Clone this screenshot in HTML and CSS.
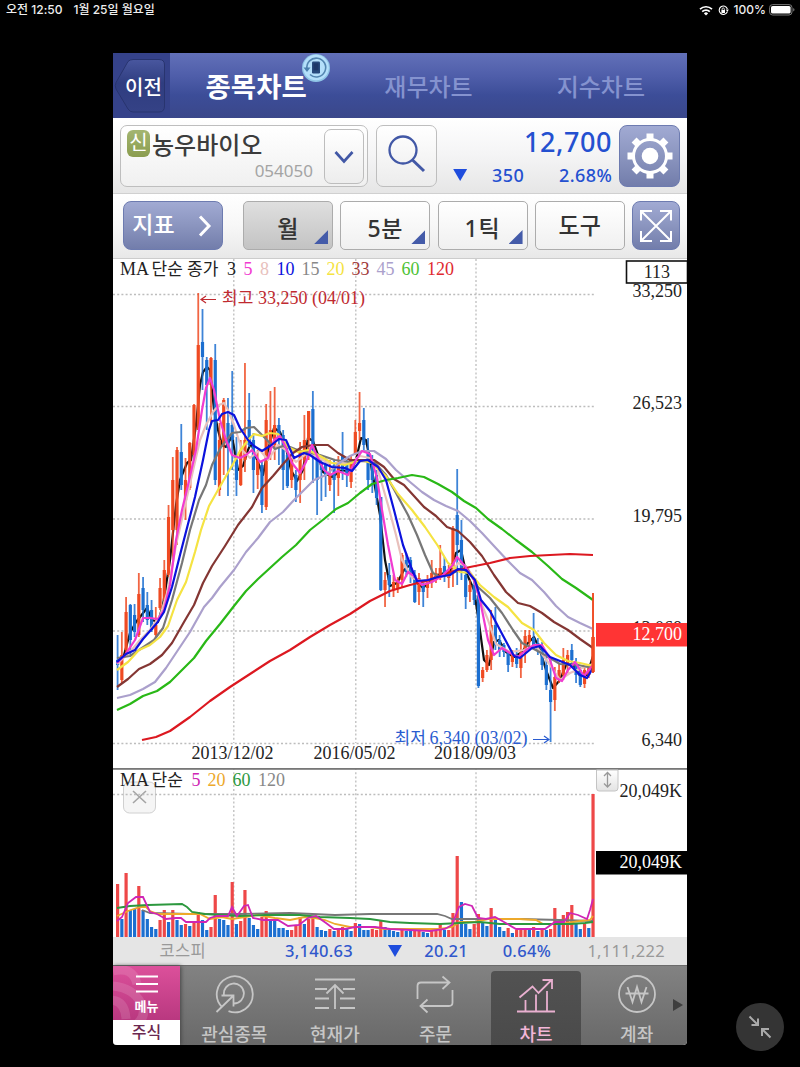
FILE: index.html
```html
<!DOCTYPE html>
<html lang="ko">
<head>
  <meta charset="UTF-8" />
  <title>종목차트</title>
  <meta name="viewport" content="width=device-width, initial-scale=1.0" />
  <link rel="stylesheet" href="styles.css">
</head>
<body>
  <div class="status">
    <div class="status-left"><span>오전 12:50</span><span>1월 25일 월요일</span></div>
    <div class="status-right">
      <svg width="14" height="11" viewBox="0 0 14 11"><path d="M1 4.2a8.6 8.6 0 0 1 12 0M3.2 6.6a5.4 5.4 0 0 1 7.6 0" fill="none" stroke="#fff" stroke-width="1.7"/><path d="M4.9 8.4a3 3 0 0 1 4.2 0L7 10.6z" fill="#fff"/></svg>
      <svg width="11" height="11" viewBox="0 0 11 11"><path d="M9.3 6.8A4.2 4.2 0 1 1 9.4 4" fill="none" stroke="#fff" stroke-width="1.1"/><path d="M7.8 4.6h3L9.4 7z" fill="#fff"/><rect x="3.4" y="5" width="3.6" height="3" fill="#fff"/><path d="M4.1 5V4a1.1 1.1 0 0 1 2.2 0v1" fill="none" stroke="#fff" stroke-width=".8"/></svg>
      <span>100%</span>
      <svg width="26" height="12" viewBox="0 0 26 12"><rect x=".6" y=".6" width="22.4" height="10.4" rx="3" fill="none" stroke="#777"/><rect x="2" y="2" width="19.6" height="7.6" rx="1.6" fill="#fff"/><path d="M24.2 4v3.6q1.3-.5 1.3-1.8T24.2 4" fill="#777"/></svg>
    </div>
  </div>

  <div class="app">
    <!-- HEADER -->
    <div class="header">
      <div class="back">
        <svg class="back-shape" width="57" height="65" viewBox="0 0 57 65"><defs><linearGradient id="gBack" x1="0" y1="0" x2="0" y2="1"><stop offset="0" stop-color="#49579f"/><stop offset=".45" stop-color="#2f3d80"/><stop offset="1" stop-color="#354286"/></linearGradient></defs><path d="M15 8.500Q17 6.500 20 6.500H46Q51.500 6.500 51.500 12V53Q51.500 59 46 59H20Q17 59 15 56L3 36Q1.500 32.500 3 29.500Z" fill="url(#gBack)" stroke="#28346f"/></svg>
        <span>이전</span>
      </div>
      <div class="tab active">종목차트
        <svg class="sync" width="30" height="30" viewBox="0 0 30 30"><circle cx="15" cy="15" r="14" fill="#8fc4e6"/><circle cx="15" cy="14.500" r="12.800" fill="#b4dffa"/><path d="M6 16A9.400 9.400 0 1 1 9 21.500" fill="none" stroke="#5385b0" stroke-width="1.600"/><path d="M2.500 14.500h7L6 19z" fill="#4a7fae"/><rect x="11" y="8.500" width="8" height="12" rx="1.200" fill="#27497c"/><rect x="12.500" y="10.300" width="5" height="7" fill="#1d3768"/></svg>
      </div>
      <div class="tab">재무차트</div>
      <div class="tab">지수차트</div>
    </div>

    <!-- STOCK -->
    <div class="stock">
      <div class="search">
        <div class="names">
          <div class="name"><i>신</i><b>농우바이오</b></div>
          <div class="code">054050</div>
        </div>
        <div class="drop"><svg width="20" height="14" viewBox="0 0 20 14"><path d="M1.500 2L10 11.500 18.500 2" fill="none" stroke="#4258a6" stroke-width="2.700"/></svg></div>
      </div>
      <div class="find"><svg width="42" height="42" viewBox="0 0 42 42"><circle cx="17" cy="17" r="13.500" fill="none" stroke="#4258a6" stroke-width="2.300"/><path d="M26.500 27L38 38" stroke="#4258a6" stroke-width="3"/></svg></div>
      <div class="quote">
        <div class="price">12,700</div>
        <div class="diff"><em class="down"></em><span>350</span><span>2.68%</span></div>
      </div>
      <div class="blue gear"><svg width="48" height="48" viewBox="-24 -24 48 48"><g fill="#fff"><path id="tooth" d="M-3.500-22.500h7v6h-7z"/><use href="#tooth" transform="rotate(45)"/><use href="#tooth" transform="rotate(90)"/><use href="#tooth" transform="rotate(135)"/><use href="#tooth" transform="rotate(180)"/><use href="#tooth" transform="rotate(225)"/><use href="#tooth" transform="rotate(270)"/><use href="#tooth" transform="rotate(315)"/></g><circle r="16.500" fill="none" stroke="#fff" stroke-width="3"/><circle r="8.300" fill="#fff"/></svg></div>
    </div>

    <!-- TOOLS -->
    <div class="tools">
      <div class="blue indi"><span>지표</span><svg width="14" height="22" viewBox="0 0 14 22"><path d="M2 1.500L11 11 2 20.500" fill="none" stroke="#fff" stroke-width="3"/></svg></div>
      <div class="tool on corner">월</div>
      <div class="tool corner">5분</div>
      <div class="tool corner">1틱</div>
      <div class="tool">도구</div>
      <div class="blue expand"><svg width="34" height="34" viewBox="0 0 34 34"><path d="M2 2L32 32M32 2L2 32M2 11.500V2H13M21 2H32V11.500M32 22V32H21M13 32H2V22" fill="none" stroke="#fff" stroke-width="2"/></svg></div>
    </div>

    <svg class="chart" id="priceChart" width="574" height="509" viewBox="113 259 574 509"></svg>
    <svg class="chart volume" id="volumeChart" width="574" height="169" viewBox="113 768 574 169"></svg>

    <!-- INDEX -->
    <div class="index">
      <span class="muted">코스피</span><span>3,140.63</span><em class="down"></em><span>20.21</span><span>0.64%</span><span class="muted">1,111,222</span>
    </div>

    <!-- BOTTOM MENU -->
    <div class="bottom">
      <div class="menu">
        <div class="menu-top">
          <svg class="swirl" width="67" height="55" viewBox="0 0 67 55"><path d="M0 5Q20 0 24 18M0 20Q20 22 28 37T18 62M-3 34Q12 34 13 53" fill="none" stroke="#fff" stroke-opacity=".13" stroke-width="9"/></svg>
          <svg width="22" height="18" viewBox="0 0 22 18"><path d="M0 1.500H22M0 9H22M0 16.500H22" stroke="#fff" stroke-width="2"/></svg>
          <span>메뉴</span>
        </div>
        <div class="menu-bottom">주식</div>
      </div>
      <div class="item"><svg width="40" height="40" viewBox="0 0 40 40"><path d="M8.500 33.500A18 18 0 1 1 14.500 37.200M10 21A10 10 0 1 1 20 29.500M2.500 38L19 22M7.500 21.500H19.500V32.500" /></svg><span>관심종목</span></div>
      <div class="item"><svg width="42" height="40" viewBox="0 0 42 40"><path d="M1 5.500H41M1 15H13M29 15H41M1 24.500H15M26 24.500H41M1 34H15M26 34H41M21 35V11M12.500 19.500L21 11 29.500 19.500"/></svg><span>현재가</span></div>
      <div class="item"><svg width="40" height="40" viewBox="0 0 40 40"><path d="M2.500 25V12Q2.500 8.500 6 8.500H34M27.500 2.500L34.500 8.500 27.500 15M37.500 16V28.500Q37.500 32 34 32H6M12.500 25.500L5.500 32 12.500 38.500"/></svg><span>주문</span></div>
      <div class="item sel"><svg width="40" height="40" viewBox="0 0 40 40"><path d="M1 37.500H39M9.500 37V26M20 37V20.500M31 37V17M3.500 23.500L16.500 12.500 22.500 19 35.500 6M26.500 6H36V15"/></svg><span>차트</span></div>
      <div class="item"><svg width="40" height="40" viewBox="0 0 40 40"><circle cx="20" cy="20" r="18"/><path d="M10.500 13L15.500 28 20 13 24.500 28 29.500 13M8.500 19.500H31.500"/></svg><span>계좌</span></div>
      <div class="next"></div>
    </div>
  </div>

  <div class="shrink"><svg width="24" height="24" viewBox="0 0 24 24"><path d="M1.500 1.500L10 10M10 3.500V10H3.500M22.500 22.500L14 14M21 14H14V21" fill="none" stroke="#aaa" stroke-width="2"/></svg></div>

<script src="chart.js"></script>
</body>
</html>
```
FILE: styles.css
```css
*,*::before,*::after{box-sizing:border-box;margin:0;padding:0}
body{width:800px;height:1067px;background:#000;overflow:hidden;font-family:"Noto Sans","Noto Sans CJK KR",sans-serif}
svg{display:block}
i,em{font-style:normal}
/* status bar */
.status{height:53px;padding:2px 5px 0 6px;display:flex;justify-content:space-between;align-items:flex-start;color:#eee;font:500 12px/16px Inter,"Noto Sans CJK KR",sans-serif}
.status-left{display:flex;gap:11px}
.status-right{display:flex;gap:5px;align-items:center}
.status-right span{margin-right:-2px}
/* app */
.app{width:574px;height:992px;margin-left:113px;background:#fff;border-radius:0 0 4px 4px;overflow:hidden}
.header{height:65px;display:flex;background:linear-gradient(#6270b8,#4f5eaa 35%,#3c4d98 65%,#3a478a)}
.back{position:relative;width:57px;display:flex;align-items:center;justify-content:center;padding:2px 0 0 4px;background:#35428a;color:#fff;font-size:20px;font-weight:500}
.back-shape{position:absolute;left:0;top:0}
.back span{position:relative}
.tab{position:relative;flex:1;display:flex;align-items:center;justify-content:center;padding-bottom:1px;color:#8593cf;font-size:24px;font-weight:500}
.tab.active{color:#fff;font-size:27.500px;font-weight:600}
.sync{position:absolute;left:131px;top:0}
/* stock */
.stock{height:76px;padding:7px 7px 7px;display:flex;background:linear-gradient(#fff,#f4f4f5 50%,#e6e6e6);border-bottom:1px solid #d0d0d0}
.search{width:249px;height:62px;display:flex;justify-content:space-between;padding:3px;border:1px solid #bebebe;border-radius:7px;background:linear-gradient(#fff,#f0f0f0)}
.names{width:190px}
.name{height:32px;display:flex;align-items:center;padding-left:3px;color:#3c3c3c;font-size:24px;line-height:32px}
.name i{width:23px;height:27px;margin:-3px 2px 0 0;border-radius:6px;background:linear-gradient(#a3b571,#8b9d4f);color:#fff;font-size:20px;line-height:25px;text-align:center}
.name b{font-weight:500}
.code{margin-top:-3px;padding-right:1px;color:#a4a4a4;font-size:17px;line-height:25px;text-align:right}
.drop{width:40px;height:55px;border:1px solid #bdbdbd;border-radius:7px;display:flex;align-items:center;justify-content:center;background:linear-gradient(#fff,#ededed)}
.find{width:61px;height:62px;margin-left:8px;padding-bottom:4px;border:1px solid #bebebe;border-radius:7px;display:flex;align-items:center;justify-content:center;background:linear-gradient(#fff,#ececec)}
.quote{width:175px;color:#2450d0;text-align:right;font-weight:500}
.price{font-size:27px;line-height:33px;letter-spacing:.6px}
.diff{display:grid;grid-template-columns:30px 57px 88px;align-items:center;font-size:18px;line-height:34px;letter-spacing:.4px}
.down{width:14px;height:12px;background:#1f4ddd;clip-path:polygon(0 0,100% 0,50% 100%);justify-self:end}
.blue{border:1px solid #6d7bb0;border-radius:8px;background:linear-gradient(#a1aad3,#8b95bf 50%,#727dab);color:#fff;display:flex;align-items:center;justify-content:center}
.gear{width:61px;height:62px;margin-left:7px}
/* tools */
.tools{height:65px;padding:7px 7px 0 10px;display:flex;justify-content:space-between;background:linear-gradient(#fff,#f7f7f7 50%,#e8e8e8);border-bottom:1px solid #ccc}
.tools>div{height:49px}
.indi{width:100px;gap:23px;font-size:23px;font-weight:500;margin-right:13px}
.indi span{margin:-6px 0 0 -2px}
.tool{position:relative;width:90px;border:1px solid #acacac;border-radius:5px;background:linear-gradient(#fff,#f0f0f0);color:#333;font-size:23px;font-weight:500;line-height:46px;text-align:center}
.tool.on{background:linear-gradient(#dfdfdf,#c3c3c3)}
.tool.corner{line-height:53px;letter-spacing:.8px}
.tool.corner::after{content:"";position:absolute;right:4px;bottom:5px;width:14px;height:14px;background:#445ba9;clip-path:polygon(100% 0,100% 100%,0 100%)}
.expand{width:48px}
/* charts */
.chart{font-family:"Liberation Serif","Noto Sans CJK KR",serif;font-size:18px}
.grid{stroke:#bdbdbd;stroke-width:1.300;stroke-dasharray:2 2.200}
.ma{fill:none;stroke-width:2.200;stroke-linejoin:round}
.vma{fill:none;stroke-width:1.800}
.end{text-anchor:end}
.ko{font-size:17px}
/* index */
.index{height:28px;padding:0 22px 0 43px;display:grid;grid-template-columns:50px 147px 49px 66px 83px 114px;align-items:center;line-height:28px;text-align:right;white-space:nowrap;background:#e5e5e5;color:#3158cc;font-size:16.500px;font-weight:500;letter-spacing:.3px}
.index .muted{color:#999;font-weight:400}
/* bottom menu */
.bottom{position:relative;height:80px;display:flex;background:linear-gradient(#828282,#696969);border-top:1px solid #6b6b6b}
.menu{width:67px;margin-right:4px;background:#fff;box-shadow:1px 0 4px #444}
.menu-top{position:relative;height:54px;padding-top:9px;display:flex;flex-direction:column;align-items:center;background:linear-gradient(#dc509b,#b93880);color:#fff;font-size:13px;font-weight:600;line-height:26px;overflow:hidden}
.swirl{position:absolute;left:0;top:0}
.menu-bottom{color:#6b2850;font-size:16px;font-weight:500;line-height:25px;text-align:center}
.item{width:90px;margin:5px 5.300px 0;padding-top:3px;display:flex;flex-direction:column;align-items:center;color:#c6c6c6;font-size:18px;font-weight:500;line-height:40px;white-space:nowrap}
.item svg{flex:none;fill:none;stroke:#c6c6c6;stroke-width:1.800}
.item span{height:32px;margin-top:1px;line-height:38px}
.item.sel{background:linear-gradient(#525252,#4a4a4a);border-radius:4px 4px 0 0;color:#f3b6d8}
.item.sel svg{stroke:#e9b0d0}
.next{position:absolute;right:4px;top:33px;width:10px;height:12px;background:#3e3e3e;clip-path:polygon(0 0,100% 50%,0 100%)}
.shrink{position:absolute;left:736px;top:1003px;width:48px;height:48px;border-radius:50%;background:#343434;display:flex;align-items:center;justify-content:center}
```
FILE: chart.js
```js
const STEP = 4.245, X0 = 117.6;
const RED = '#ef4a22', BLUE = '#1c6fd0';

// ---------- MONTHLY CANDLES: r/b, high, low, body top, body bottom ----------
const candles = `b635,690,660,665 r632,683,655,680 r597,653,612,650 b604,655,605,640 b604,637,615,632 r573,637,594,635 b577,622,588,610
b592,625,605,620 b600,632,610,630 r607,638,625,635 r578,610,588,608 r560,607,570,600 r505,577,517,575 r457,560,480,530
r447,545,450,530 b424,490,452,485 r458,520,480,500 r442,490,443,488 r404,463,405,455 r293,430,345,430 b309,390,342,357
b357,430,360,385 r357,423,358,385 b344,485,360,480 r423,496,440,490 r398,475,400,445 b398,496,423,448 b371,470,425,440
b437,496,460,480 r440,486,450,485 r363,472,440,460 b393,447,420,445 b433,493,440,470 r450,489,460,475 b462,513,465,505
r404,510,420,507 r391,460,430,450 r387,460,425,445 b418,465,425,440 b430,490,435,470 b443,488,455,486 r448,488,455,480
b470,502,475,490 r442,503,450,480 r415,480,440,460 r411,460,411,440 b391,483,409,450 b453,515,455,480 b455,501,462,470
b458,497,465,475 r460,491,475,485 b460,513,465,480 r456,496,465,478 b432,480,455,470 b460,487,465,475 r455,488,460,482
r420,453,432,455 r392,440,423,431 b408,450,420,445 b438,490,450,480 b455,493,465,480 b470,505,475,498 b497,591,497,590
r572,607,580,590 b563,597,575,585 r575,597,582,590 r577,593,580,588 r553,587,555,580 b553,577,560,572 b557,583,560,575
b570,603,575,602 r573,605,578,592 b580,607,585,592 r575,598,580,588 r560,588,573,582 r568,583,573,578 r545,580,568,576
b557,582,566,575 r565,588,570,578 r526,587,528,570 b469,585,515,545 b520,580,540,570 b565,609,575,597 r580,602,585,592
b578,605,585,600 b593,688,595,686 r667,682,670,678 r650,672,655,670 r610,670,625,660 b607,650,625,645 b635,657,640,650
b643,657,645,652 b650,672,652,665 r650,667,655,662 b648,668,655,664 r642,678,652,668 r630,663,636,652 r630,650,635,642
b613,650,638,649 b638,655,643,650 b642,670,648,665 b657,690,665,685 b657,742,690,702 r667,711,677,700 r663,683,670,680
r648,680,660,675 r650,673,655,665 b644,667,650,660 b658,683,662,675 b667,687,670,685 r667,688,670,684 r665,678,667,675
r593,673,637,672`.split(/\s+/);

// ---------- MOVING AVERAGES, 3 months first ----------
const mas = [
  ['#111', '117,662 124,655 130,633 136,622 140,617 147,608 152,620 158,622 163,605 170,560 176,505 180,480 187,463 191,460 196,425 200,385 203,372 207,367 210,370 214,410 218,430 222,445 226,447 232,436 238,470 243,466 248,450 251,443 257,460 263,475 268,450 274,428 280,432 286,448 291,470 297,481 303,470 308,438 313,441 318,455 323,472 332,477 342,470 350,472 356,460 361,438 366,440 370,460 375,487 380,515 385,560 390,586 397,583 404,570 410,565 416,582 423,588 430,581 440,574 450,572 456,553 461,550 466,572 474,590 479,623 484,660 489,665 494,642 499,640 506,652 514,657 522,652 528,643 534,637 540,650 546,670 553,688 560,680 566,665 573,664 580,676 587,675 593,656'],
  ['#e8c0bc', '117,664 130,652 140,640 150,630 160,616 168,590 176,545 184,510 192,475 200,440 206,425 213,412 219,405 224,403 228,410 234,425 242,450 250,458 260,450 268,460 278,445 286,450 296,462 306,454 316,456 328,463 338,463 350,463 360,456 370,458 378,470 388,505 396,535 402,560 412,578 424,582 438,577 450,575 458,563 466,566 474,578 480,600 488,620 496,644 510,652 524,650 536,646 548,662 560,680 570,673 582,668 593,664'],
  ['#777', '117,658 130,656 142,648 154,640 163,628 172,600 182,563 190,530 199,500 206,485 212,465 221,447 232,433 240,432 246,428 254,427 260,433 267,440 275,449 283,446 290,447 300,451 308,452 320,455 335,460 350,462 365,461 375,463 386,475 396,493 408,515 417,535 425,555 433,573 440,577 450,574 460,570 468,570 478,587 490,598 502,613 513,630 522,643 532,648 545,655 560,664 578,665 593,668'],
  ['#f5e342', '117,670 128,662 139,650 150,645 160,637 168,626 177,600 186,582 195,552 201,530 209,506 218,490 226,476 233,464 240,451 248,440 254,434 262,436 270,433 278,434 288,447 298,452 308,450 320,456 332,463 345,465 360,460 372,463 386,476 398,494 412,510 425,527 438,546 448,563 460,572 470,573 480,585 494,597 508,607 522,623 534,630 544,643 556,655 568,661 580,663 593,666'],
  ['#843633', '117,687 128,679 139,669 150,664 162,655 172,643 184,622 194,605 203,583 212,566 225,546 238,525 252,507 262,488 273,476 284,463 293,453 302,447 313,445 328,445 338,453 350,460 362,460 374,460 384,467 394,479 404,485 414,496 424,507 436,516 447,527 458,531 470,542 482,556 494,575 506,592 518,603 530,606 542,613 554,622 568,630 580,639 593,648'],
  ['#aba0cc', '117,698 130,695 143,689 155,682 166,668 178,650 190,632 204,607 212,598 220,587 234,570 246,552 258,538 270,522 283,512 294,500 304,490 314,480 326,475 338,464 350,456 362,451 374,451 386,459 396,470 410,482 422,492 434,500 446,506 458,511 470,521 482,533 494,546 508,561 520,573 532,580 544,592 556,606 568,617 580,623 593,629'],
  ['#29b816', '117,710 130,704 143,696 157,691 170,682 182,670 194,658 206,641 220,624 234,606 246,591 258,579 270,568 282,557 296,545 310,530 324,519 336,509 348,503 360,493 372,484 386,480 398,478 412,475 424,477 438,484 452,492 464,501 476,508 488,519 502,529 516,540 532,552 548,566 562,579 576,588 593,600'],
  ['#dc1820', '142,740 156,737 170,731 190,717 210,701 230,687 250,674 270,661 290,650 310,637 330,625 350,614 370,601 390,591 410,585 430,580 450,572 470,567 490,563 510,558 530,556 550,555 570,554 593,555'],
  ['#f13bd0', '117,663 125,655 135,640 143,618 150,618 158,619 164,610 170,585 176,540 182,510 188,485 196,450 202,410 206,388 210,378 214,390 220,420 226,440 232,455 240,458 246,455 252,450 260,462 268,458 274,440 280,436 286,448 292,463 300,473 306,462 312,445 318,458 324,470 330,475 338,471 348,475 356,460 362,451 370,454 377,478 382,510 388,545 395,580 402,584 408,572 414,576 422,585 432,582 442,576 452,566 457,557 464,565 474,580 480,600 488,640 494,655 502,648 510,653 518,657 526,650 534,645 542,645 549,657 556,678 562,681 568,670 575,662 584,676 593,665'],
  ['#0c12dd', '117,662 126,654 135,650 143,639 150,631 157,623 164,612 172,587 180,555 188,524 195,497 203,460 209,430 212,421 218,420 222,414 228,412 234,415 240,428 248,440 254,446 262,451 270,446 279,439 286,440 294,458 304,453 310,455 320,462 332,467 345,468 352,471 360,461 368,460 378,467 386,480 394,510 403,545 411,567 417,581 428,580 438,577 450,575 458,569 466,570 475,580 481,600 490,611 500,630 508,645 514,656 520,658 532,648 540,646 550,657 560,661 570,665 580,675 587,678 593,668']
];

// ---------- VOLUME: r/b and bar height ----------
const volumes = `r53 b18 r64 b27 b28 r51 b27 b18 b10 b8 r17 r27 b15 r27 b17 b12 r13 b11 r14 r25 b17 b7 r10 r42 b18 b17 b12 r55 b13 r16 r47
b19 b12 b8 r20 r26 b17 b17 b9 b9 b7 r7 r12 r20 b13 r18 r21 b10 b7 b6 r8 b6 r8 r10 b8 b6 r14 b13 b7 b7 r8 r7 r16 b10 b8 b6 b5 r7 b6 b6
r7 r6 b5 b4 r6 r6 r14 b7 r7 r24 r81 b35 b13 b8 r13 r23 b15 b11 r29 b17 b10 b6 r9 b4 r7 r7 r7 b8 r10 b6 r7 b7 r8 r29 b13 r22 r25 r32
b13 b8 r13 b9 r143`.split(/\s+/);

const vmas = [
  ['#777', '142,910 150,913 190,914 240,914 290,913 335,915 370,914 400,914 437,914 445,916 452,919 470,919 520,919 560,920 593,921'],
  ['#eda92b', '117,916 128,911 140,907 146,907 150,911 158,914 170,914 184,914 200,914 210,919 222,917 232,919 245,917 258,915 275,918 290,920 305,917 315,918 325,920 335,924 350,927 370,927 385,929 410,929 440,929 452,927 460,922 475,922 488,919 520,919 536,920 543,924 560,924 580,921 590,920 593,916'],
  ['#2c983e', '117,908 130,906 148,905 182,904 187,907 192,912 205,914 220,915 240,916 265,915 300,915 320,917 350,918 370,919 390,922 410,923 440,924 460,923 480,922 500,924 540,924 570,924 585,923 593,922'],
  ['#cf25b5', '117,921 122,917 128,903 136,897 143,897 150,912 157,914 166,919 176,918 181,918 186,922 196,922 206,922 210,918 217,916 228,916 232,907 237,916 244,906 248,905 253,918 263,920 278,920 288,926 299,925 308,918 316,916 326,923 334,929 345,929 355,927 375,927 390,929 410,930 430,931 445,929 452,925 459,907 465,904 472,906 478,918 486,919 495,917 504,922 516,929 530,929 545,929 555,922 564,922 570,913 578,915 587,919 590,910 593,899']
];

function line(x1, y1, x2, y2){ return `<line class="grid" x1="${x1}" y1="${y1}" x2="${x2}" y2="${y2}"/>`; }
function text(x, y, str, fill='#222', cls=''){ return `<text x="${x}" y="${y}" fill="${fill}" class="${cls}">${str}</text>`; }
function ma(m){ return `<polyline class="ma" stroke="${m[0]}" points="${m[1]}"/>`; }

function drawPrice(){
  let s = '';
  [294.5, 406.5, 519, 631, 743.5].forEach(y => s += line(113, y, 596, y));
  [233.8, 355.8, 476].forEach(x => s += line(x, 259, x, 743));
  s += ma(mas[0]); // fastest one runs behind the candles
  candles.forEach((c, i) => {
    const [h, l, t, b] = c.slice(1).split(',').map(Number);
    const x = X0 + i*STEP, col = c[0] === 'r' ? RED : BLUE;
    s += `<rect x="${x-.9}" y="${h}" width="1.800" height="${l-h}" fill="${col}" fill-opacity=".85"/><rect x="${x-1.6}" y="${t}" width="3.200" height="${b-t}" fill="${col}"/>`;
  });
  mas.slice(1).forEach(m => s += ma(m));
  // last candle stays above the lines
  s += `<rect x="592.200" y="593" width="1.600" height="80" fill="${RED}"/><rect x="591.500" y="637" width="3" height="35" fill="${RED}"/>`;

  s += text(120, 275, 'MA') + text(151.5, 275, '단순 종가', '#222', 'ko');
  [[227,'3','#222'],[243.5,'5','#f13bd0'],[260,'8','#e8c0bc'],[276.5,'10','#0c12dd'],[301.5,'15','#888'],[326.5,'20','#f5e342'],[351.5,'33','#a13a3a'],[376.5,'45','#aba0cc'],[401.5,'60','#4cc234'],[427,'120','#e02a30']]
    .forEach(p => s += text(p[0], 275, p[1], p[2]));

  s += `<path d="M216 299.500H201M206 296L201 299.500 206 303" fill="none" stroke="#c02a30" stroke-width="1.200"/>`;
  s += text(222, 304, '최고', '#c02a30', 'ko') + text(258, 304, '33,250 (04/01)', '#c02a30');
  s += text(394.5, 744, '최저', '#2a5cd0', 'ko') + text(429.5, 744, '6,340 (03/02)', '#2a5cd0');
  s += `<path d="M533 739.500H549M544 736L549 739.500 544 743" fill="none" stroke="#2a5cd0" stroke-width="1.200"/>`;

  s += text(191.5, 759, '2013/12/02') + text(313.5, 759, '2016/05/02') + text(434, 759, '2018/09/03');
  s += text(682, 297, '33,250', '#222', 'end') + text(682, 409, '26,523', '#222', 'end') + text(682, 522, '19,795', '#222', 'end') + text(682, 634, '13,068', '#222', 'end') + text(682, 746, '6,340', '#222', 'end');
  s += `<rect x="626.500" y="261" width="61" height="22" fill="#fff" stroke="#111" stroke-width="1.600"/>` + text(670, 278, '113', '#222', 'end');
  s += `<rect x="596" y="623" width="91" height="23.500" fill="#ff3434"/>` + text(682, 639.5, '12,700', '#fff', 'end');
  priceChart.innerHTML = s;
}

function drawVolume(){
  let s = `<defs><linearGradient id="gBtn" x1="0" y1="0" x2="0" y2="1"><stop offset="0" stop-color="#fff"/><stop offset="1" stop-color="#e3e3e3"/></linearGradient></defs>`;
  [233.8, 355.8, 476].forEach(x => s += line(x, 768, x, 937));
  // close button of the pane
  s += `<rect x="123.500" y="782" width="32" height="31" rx="6" fill="#f5f5f5" stroke="#d0d0d0"/><path d="M133 791L146 803M146 791L133 803" stroke="#a4a4a4" stroke-width="1.600"/>`;
  s += line(113, 794.5, 596, 794.5);
  volumes.forEach((v, i) => {
    const h = +v.slice(1);
    s += `<rect x="${X0 + i*STEP - 1.6}" y="${937-h}" width="3.200" height="${h}" fill="${v[0] === 'r' ? '#ee4848' : '#1c6fd0'}"/>`;
  });
  vmas.forEach(m => s += `<polyline class="vma" stroke="${m[0]}" points="${m[1]}"/>`);
  s += `<rect x="113" y="768" width="574" height="1.800" fill="#777"/>`;
  s += text(120, 786, 'MA') + text(151.5, 786, '단순', '#222', 'ko');
  [[191.5,'5','#cf25b5'],[207.5,'20','#eda92b'],[232.5,'60','#2c983e'],[258,'120','#888']].forEach(p => s += text(p[0], 786, p[1], p[2]));
  s += `<path d="M596.500 770H618V788Q618 791 615 791H599Q596.500 791 596.500 788Z" fill="url(#gBtn)" stroke="#c4c4c4"/><path d="M607.500 773V786M604 776L607.500 772.500 611 776M604 783.500L607.500 787 611 783.500" fill="none" stroke="#999" stroke-width="1.300"/>`;
  s += text(682, 797, '20,049K', '#222', 'end');
  s += `<rect x="596" y="851" width="91" height="23.500" fill="#000"/>` + text(682, 867.5, '20,049K', '#fff', 'end');
  volumeChart.innerHTML = s;
}

drawPrice();
drawVolume();
```
